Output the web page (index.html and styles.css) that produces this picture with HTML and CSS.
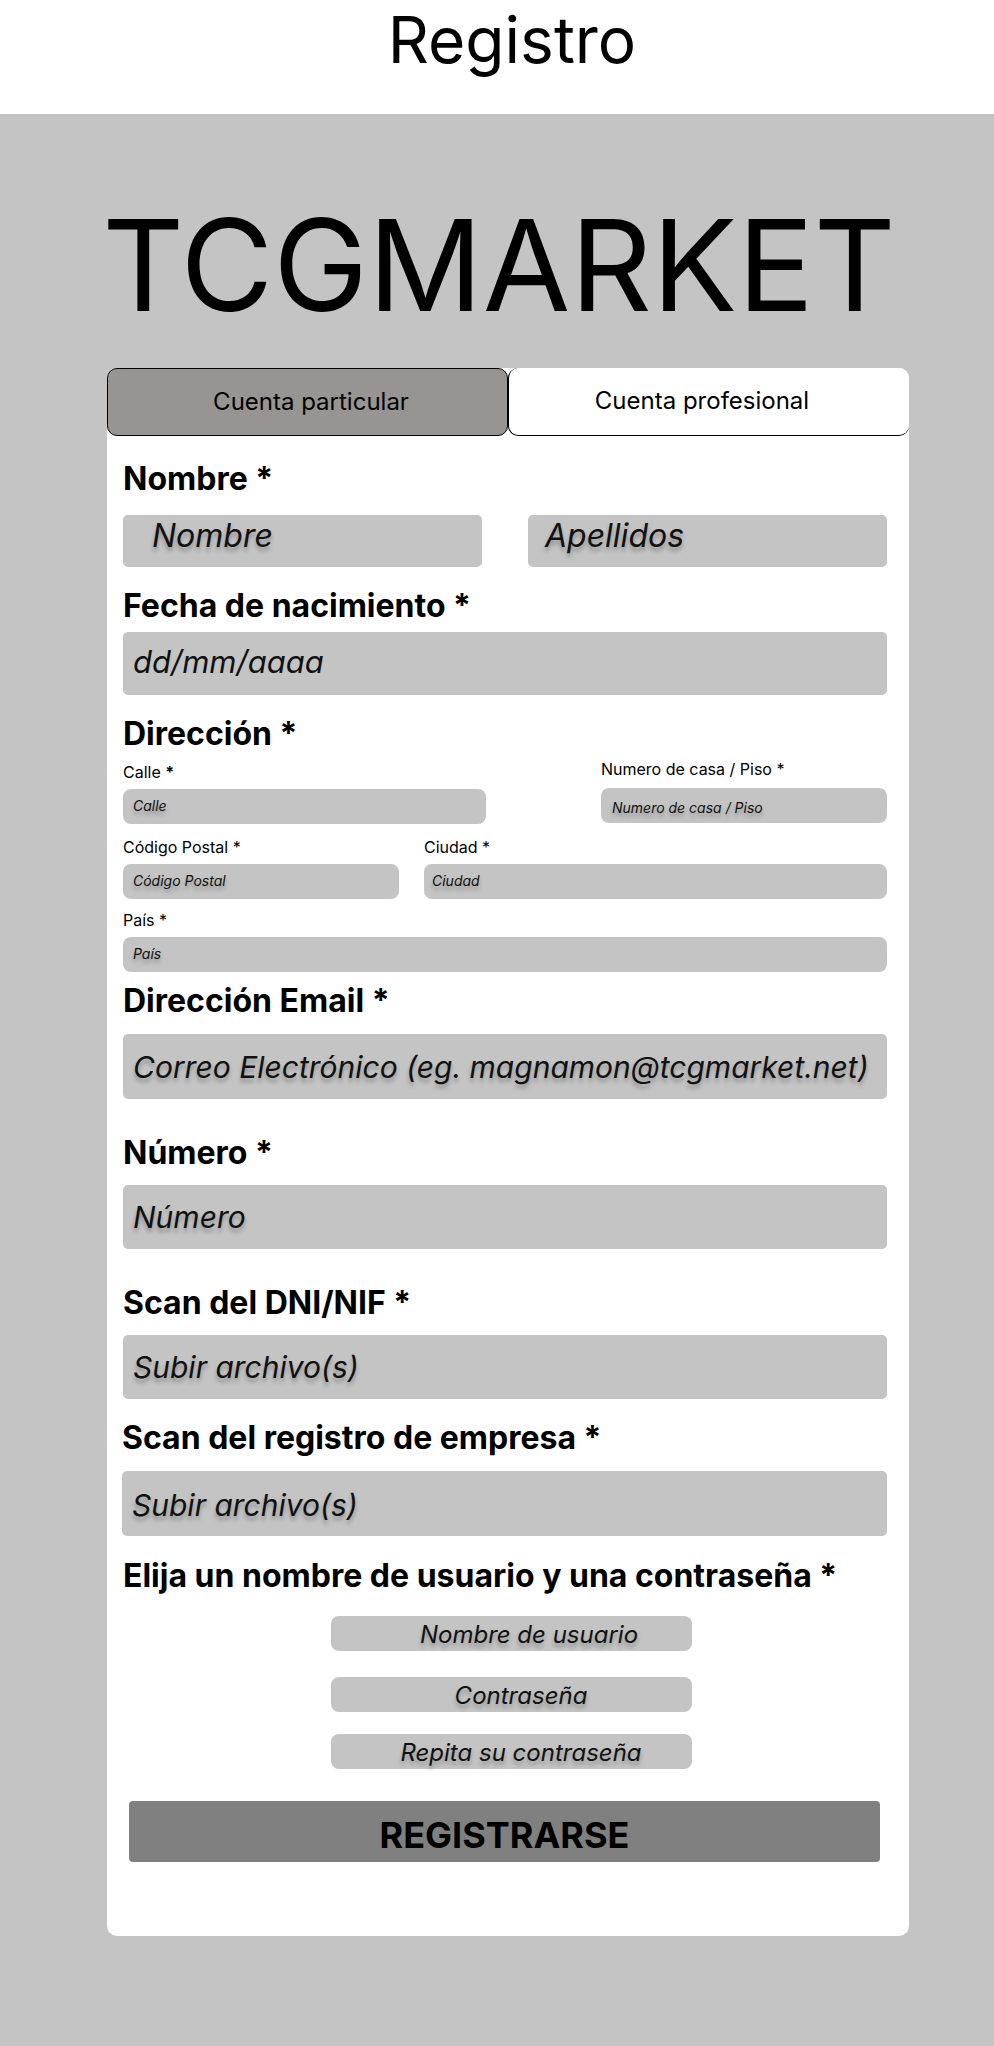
FILE: index.html
```html
<!DOCTYPE html>
<html lang="es">
<head>
<meta charset="utf-8">
<title>Registro</title>
<link rel="stylesheet" href="styles.css">
</head>
<body>
<header class="top">
  <h1 class="top-title">Registro</h1>
</header>
<main class="main">
  <div class="brand">TCGMARKET</div>
  <section class="card">
    <div class="tabs">
      <div class="tab tab-active">Cuenta particular</div>
      <div class="tab tab-inactive">Cuenta profesional</div>
    </div>
    <div class="form">
      <h2 class="label label-nombre">Nombre *</h2>
      <div class="row-names">
        <div class="field field-name shadow">Nombre</div>
        <div class="field field-surname shadow">Apellidos</div>
      </div>

      <h2 class="label label-fecha">Fecha de nacimiento *</h2>
      <div class="field field-date">dd/mm/aaaa</div>

      <h2 class="label label-dir">Dirección *</h2>
      <div class="row-addr1">
        <div class="col">
          <div class="sublabel">Calle <b>*</b></div>
          <div class="sfield shadow">Calle</div>
        </div>
        <div class="col">
          <div class="sublabel sublabel-up">Numero de casa / Piso *</div>
          <div class="sfield sfield-num shadow">Numero de casa / Piso</div>
        </div>
      </div>
      <div class="row-addr2">
        <div class="col">
          <div class="sublabel">Código Postal *</div>
          <div class="sfield shadow">Código Postal</div>
        </div>
        <div class="col">
          <div class="sublabel">Ciudad *</div>
          <div class="sfield sfield-city shadow">Ciudad</div>
        </div>
      </div>
      <div class="row-addr3">
        <div class="sublabel">País *</div>
        <div class="sfield shadow">País</div>
      </div>

      <h2 class="label label-email">Dirección Email *</h2>
      <div class="field field-email shadow">Correo Electrónico (eg. magnamon@tcgmarket.net)</div>

      <h2 class="label label-gap">Número *</h2>
      <div class="field field-tall shadow">Número</div>

      <h2 class="label label-gap">Scan del DNI/NIF *</h2>
      <div class="field field-tall shadow">Subir archivo(s)</div>

      <h2 class="label label-empresa">Scan del registro de empresa *</h2>
      <div class="field field-empresa shadow">Subir archivo(s)</div>

      <h2 class="label label-user">Elija un nombre de usuario y una contraseña *</h2>
      <div class="ufield ufield-first shadow">Nombre de usuario</div>
      <div class="ufield ufield-second shadow">Contraseña</div>
      <div class="ufield ufield-third shadow">Repita su contraseña</div>

      <button class="submit" type="button">REGISTRARSE</button>
    </div>
  </section>
</main>
</body>
</html>
```

FILE: styles.css
```css
* { box-sizing: border-box; }

html, body {
  margin: 0;
  padding: 0;
}

body {
  background: #c4c4c4;
  font-family: Inter, "Noto Sans", sans-serif;
  color: #000;
  min-height: 2046px;
}

.top {
  background: #fff;
  height: 114px;
  padding-top: 8px;
  padding-left: 30px;
  text-align: center;
}

.top-title {
  margin: 0;
  font-size: 64px;
  line-height: 64px;
  font-weight: 400;
}

.main {
  padding-top: 88px;
  padding-bottom: 111px;
}

.brand {
  font-size: 127px;
  line-height: 127px;
  font-weight: 400;
  text-align: center;
  padding-left: 4px;
}

.card {
  margin: 39px 0 0 107px;
  width: 802px;
  background: #fff;
  border-radius: 10px;
  padding-bottom: 74px;
}

.tabs {
  display: flex;
  height: 68px;
}

.tab {
  width: 401px;
  flex: none;
  display: flex;
  align-items: center;
  justify-content: center;
  font-size: 24px;
  font-weight: 400;
  padding-bottom: 2px;
  border-radius: 10px;
}

.tab-active {
  background: #979492;
  border: 1px solid #000;
  padding-left: 7px;
}

.tab-inactive {
  background: #fff;
  border-left: 1px solid #000;
  border-bottom: 1px solid #000;
  padding-right: 14px;
}

.form {
  padding: 0 22px 0 16px;
}

.label {
  margin: 0;
  font-size: 32px;
  line-height: 36px;
  font-weight: 700;
}

.label-nombre { margin-top: 25px; }
.label-fecha { margin-top: 21px; }
.label-dir { margin-top: 21px; }
.label-email { margin-top: 11px; }
.label-gap { margin-top: 36px; }
.label-empresa { margin-top: 21px; margin-left: -1px; }
.label-user { margin-top: 22px; }

.field {
  background: #c4c4c4;
  border-radius: 5px;
  font-size: 30px;
  line-height: 36px;
  font-style: italic;
  color: #111;
  padding-left: 10px;
  white-space: nowrap;
}

.shadow {
  text-shadow: 0 4px 4px rgba(0, 0, 0, 0.28);
}

.row-names {
  margin-top: 18px;
  display: grid;
  grid-template-columns: 359px 359px;
  column-gap: 46px;
}

.field-name,
.field-surname {
  height: 52px;
  padding-top: 3px;
  font-size: 32px;
}

.field-name { padding-left: 29px; }
.field-surname { padding-left: 17px; }

.field-date {
  margin-top: 8px;
  height: 63px;
  padding-top: 12px;
  font-size: 31px;
}

.field-email {
  margin-top: 15px;
  height: 65px;
  padding-top: 15px;
}

.field-tall {
  margin-top: 14px;
  height: 64px;
  padding-top: 14px;
}

.field-empresa {
  margin-top: 15px;
  margin-left: -1px;
  height: 65px;
  padding-top: 16px;
}

.row-addr1 {
  margin-top: 10px;
  display: grid;
  grid-template-columns: 363px 286px;
  column-gap: 115px;
}

.row-addr2 {
  margin-top: 13px;
  display: grid;
  grid-template-columns: 276px 463px;
  column-gap: 25px;
}

.row-addr3 {
  margin-top: 11px;
}

.sublabel {
  font-size: 16px;
  line-height: 20px;
  font-weight: 400;
  margin-bottom: 7px;
}

.sublabel b { font-weight: 700; }

.sublabel-up {
  margin-top: -3px;
  margin-bottom: 9px;
}

.sfield {
  background: #c4c4c4;
  border-radius: 8px;
  height: 35px;
  font-size: 14px;
  line-height: 17px;
  font-style: italic;
  color: #111;
  padding: 8px 0 0 10px;
}

.sfield-num {
  padding-top: 11px;
  padding-left: 11px;
}

.sfield-city {
  padding-left: 8px;
}

.ufield {
  width: 361px;
  margin-left: 208px;
  height: 35px;
  background: #c4c4c4;
  border-radius: 8px;
  font-size: 24px;
  line-height: 28px;
  font-style: italic;
  color: #111;
  text-align: center;
  padding-top: 5px;
  padding-left: 19px;
  white-space: nowrap;
}

.ufield-first {
  margin-top: 22px;
  padding-left: 35px;
}

.ufield-second { margin-top: 26px; }
.ufield-third { margin-top: 22px; }

.submit {
  display: block;
  margin: 32px 7px 0 6px;
  width: calc(100% - 13px);
  height: 61px;
  border: none;
  border-radius: 4px;
  background: #808080;
  color: #000;
  font-family: Inter, "Noto Sans", sans-serif;
  font-size: 36px;
  font-weight: 700;
  line-height: 44px;
  padding: 6px 0 0;
  text-align: center;
}
```
